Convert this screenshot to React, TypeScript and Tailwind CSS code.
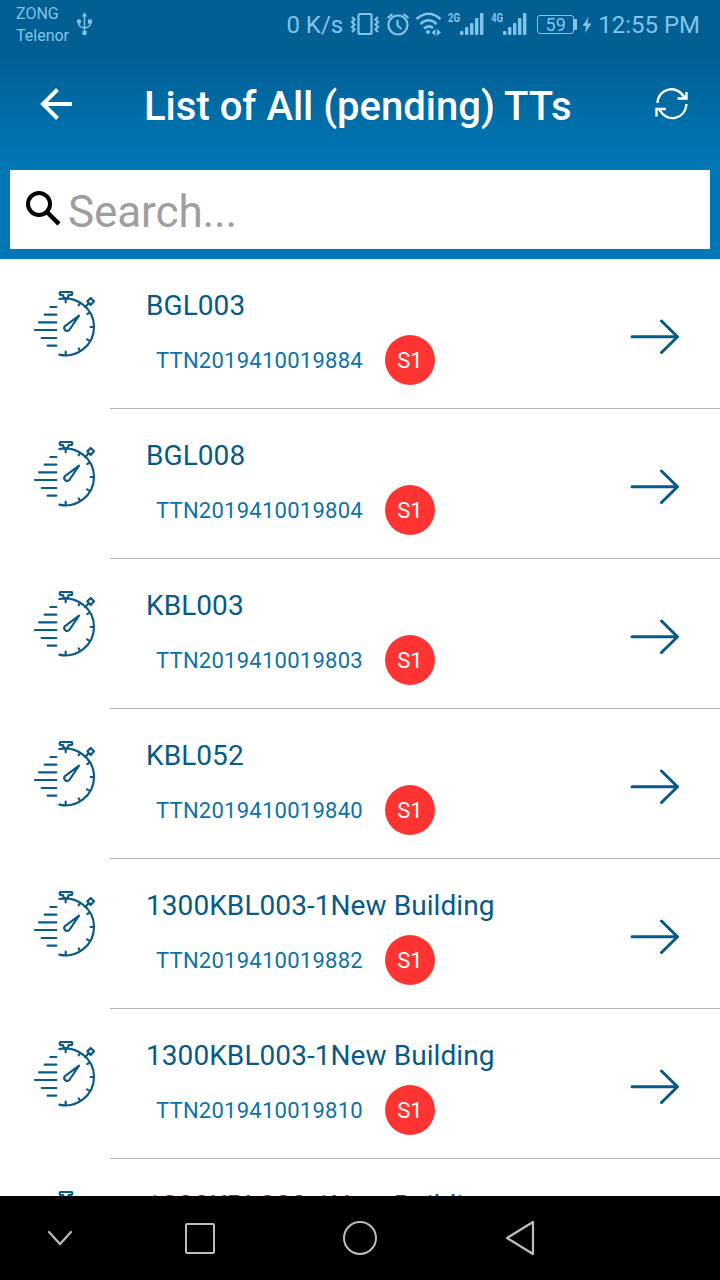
const tickets = [
  { site: "BGL003", ttn: "TTN2019410019884", severity: "S1" },
  { site: "BGL008", ttn: "TTN2019410019804", severity: "S1" },
  { site: "KBL003", ttn: "TTN2019410019803", severity: "S1" },
  { site: "KBL052", ttn: "TTN2019410019840", severity: "S1" },
  { site: "1300KBL003-1New Building", ttn: "TTN2019410019882", severity: "S1" },
  { site: "1300KBL003-1New Building", ttn: "TTN2019410019810", severity: "S1" },
];

function StopwatchIcon() {
  return (
    <svg viewBox="0 0 270 270" className="w-[90px] h-[90px] shrink-0" fill="none" stroke="#0b5a86" strokeWidth="6.500" strokeLinecap="round" strokeLinejoin="round">
      <path d="M118 57C166 47 222 82 222 141C222 198 168 236 118 224" />
      <path d="M121 36H155Q159 41 155 45H146L143 55H132L129 45H121Q117 41 121 36Z" />
      <path d="M212 54L222 64L212 75L202 64Z" />
      <path d="M204 72L196 81" />
      <path d="M177 107L148 150C140 157 129 149 134 139Z" />
      <path d="M137 58V67M180 69L176 76M209 98L202 102M221 141H212M208 182L201 178M180 212L176 205M137 224V215" />
      <path d="M91 81H109M74 104H109M57 127H109M45 150H109M65 174H109M83 197H109" />
    </svg>
  );
}

function SignalIcon({ label }: { label: string }) {
  return (
    <div className="flex">
      <span className="font-bold text-[13px] leading-3 w-[14px] origin-left scale-x-[0.75] mt-[12px]">{label}</span>
      <svg viewBox="0 0 24 24" className="w-6 h-6 mt-3 -ml-[2px]" fill="currentColor">
        <rect x="0" y="19" width="3.400" height="4" rx="1" />
        <rect x="5" y="15" width="3.400" height="8" rx="1" />
        <rect x="10" y="11" width="3.400" height="12" rx="1" />
        <rect x="15" y="6" width="3.400" height="17" rx="1" />
        <rect x="20" y="1" width="3.400" height="22" rx="1" />
      </svg>
    </div>
  );
}

function StatusBar() {
  return (
    <div className="h-[50px] flex text-[#82c3ea] pl-4 pr-5">
      <div className="text-[16px] leading-[22px] pt-[3px] w-[60px]">
        <div>ZONG</div>
        <div>Telenor</div>
      </div>
      <svg viewBox="0 0 18 26" className="w-[18px] h-[26px] mt-[11px]" fill="none" stroke="currentColor" strokeWidth="1.500">
        <path d="M8.500 5V22M3 10V13.500Q3 16 8.500 17Q14 16 14 13.500V10" />
        <path d="M8.500 1L11 5.500H6Z" fill="currentColor" stroke="none" />
        <circle cx="3" cy="10.500" r="2.200" fill="currentColor" stroke="none" />
        <path d="M12 8.500h4v4h-4zM6.500 20h4v4h-4z" fill="currentColor" stroke="none" />
      </svg>

      <div className="ml-auto flex">
        <span className="text-[24px] leading-[50px]">0 K/s</span>
        <svg viewBox="0 0 30 26" className="w-[30px] h-[26px] mt-3 ml-[7px]" fill="none" stroke="currentColor" strokeWidth="2.200">
          <rect x="8.500" y="2" width="13" height="20" rx="1.500" />
          <path d="M2 5L4.500 7.500L2 10L4.500 12.500L2 15L4.500 17.500L2 20M28 5L25.500 7.500L28 10L25.500 12.500L28 15L25.500 17.500L28 20" />
        </svg>
        <svg viewBox="0 0 24 26" className="w-6 h-[26px] mt-3 ml-[6px]" fill="none" stroke="currentColor" strokeWidth="2.200">
          <circle cx="12" cy="13" r="9.500" />
          <path d="M11.500 8V13.500L15.500 17M1.500 6L6.500 2M17.500 2L22.500 6" />
        </svg>
        <svg viewBox="0 0 28 26" className="w-7 h-[26px] mt-3 ml-[5px]" fill="none" stroke="currentColor" strokeWidth="2.600">
          <path d="M1.500 7Q13.500 -3.500 25.500 7M5.500 12Q13.500 4.500 21.500 12M9 16.500Q13.500 12.500 18 16" />
          <circle cx="13" cy="20" r="2" fill="currentColor" stroke="none" />
          <path d="M20.500 17V24L16.500 20.500ZM22 17V24L26 20.500Z" fill="currentColor" stroke="none" />
        </svg>
        <div className="ml-[5px] flex">
          <SignalIcon label="2G" />
          <div className="ml-[7px]">
            <SignalIcon label="4G" />
          </div>
        </div>
        <div className="ml-[10px] mt-[15px] w-[37px] h-[19px] rounded-[3px] border border-current text-[18px] leading-[18px] text-center">59</div>
        <div className="mt-[19px] w-[3px] h-[11px] bg-[#82c3ea]" />
        <svg viewBox="0 0 10 18" className="w-[10px] h-[18px] mt-4 ml-[5px]" fill="currentColor">
          <path d="M6.500 1L0.500 10H4L3 17L9.500 7.500H5.500Z" />
        </svg>
        <span className="text-[24px] leading-[50px] ml-[6px]">12:55 PM</span>
      </div>
    </div>
  );
}

function Header() {
  return (
    <div className="h-[259px] bg-linear-to-b from-[#005e92] from-[18%] to-[#0077b5] to-[64%]">
      <StatusBar />
      <div className="h-[120px] flex items-start pl-10 pr-[31px]">
        <svg viewBox="0 0 32 32" className="w-8 h-8 mt-[38px]" fill="none" stroke="#fff" strokeWidth="4">
          <path d="M32 16H3M17.500 1.500L3 16L17.500 30.500" />
        </svg>
        <h1 className="ml-[72px] text-[40px] leading-[48px] mt-[33px] font-medium text-white whitespace-nowrap">List of All (pending) TTs</h1>
        <svg viewBox="0 0 34 34" className="w-[34px] h-[34px] mt-[37px] ml-auto" fill="none" stroke="#fff" strokeWidth="2.400">
          <path d="M2.500 16C3 1 22 -3 29.500 10.500M31.500 5V11.500H22.500M31.500 17C30 33 12 36 4.500 23M1.500 29.500V22H11" />
        </svg>
      </div>
      <div className="mx-[10px] h-[79px] bg-white flex items-center">
        <svg viewBox="0 0 36 36" className="w-9 h-9 ml-[15px] -mt-1" fill="none" stroke="#000" strokeWidth="4">
          <circle cx="14" cy="14" r="11" />
          <path d="M22 22L34 34" strokeWidth="4.500" />
        </svg>
        <span className="ml-[7px] mt-1 text-[44px] leading-[52px] tracking-[-0.1px] text-[#9e9e9e]">Search...</span>
      </div>
    </div>
  );
}

function TicketRow({ site, ttn, severity }: { site: string; ttn: string; severity: string }) {
  return (
    <div className="h-[150px] shrink-0 flex pl-5">
      <div className="pt-[21px] w-[90px] shrink-0">
        <StopwatchIcon />
      </div>
      <div className="flex-1 flex border-b border-[#b4b4b4]">
        <div className="pl-9 flex-1">
          <div className="text-[28px] leading-8 mt-[31px] tracking-[0.07px] text-[#075a85] whitespace-nowrap">{site}</div>
          <div className="flex items-center mt-[12.500px] pl-[10px]">
            <span className="w-[229px] text-[22px] leading-7 pt-[2px] tracking-[0.25px] text-[#0b72a8]">{ttn}</span>
            <span className="w-[50px] h-[50px] rounded-full bg-[#fd3431] text-white text-[22px] leading-[52px] text-center">{severity}</span>
          </div>
        </div>
        <svg viewBox="0 0 50 36" className="w-[50px] h-9 mt-[60px] mr-10 shrink-0" fill="none" stroke="#075a85" strokeWidth="3" strokeLinecap="round" strokeLinejoin="round">
          <path d="M2 17.700H47.500M31.500 2L47.500 17.700L31.500 33.500" />
        </svg>
      </div>
    </div>
  );
}

function NavBar() {
  return (
    <div className="h-[84px] bg-black flex items-center">
      <svg viewBox="0 0 26 16" className="w-[26px] h-4 ml-[47px]" fill="none" stroke="#bdbdbd" strokeWidth="2.200" strokeLinecap="round">
        <path d="M2 2L13 14L24 2" />
      </svg>
      <div className="ml-[112px] w-[30px] h-[31px] rounded-[2px] border-2 border-[#bdbdbd]" />
      <div className="ml-[128px] w-[34px] h-[34px] rounded-full border-2 border-[#bdbdbd]" />
      <svg viewBox="0 0 30 36" className="w-[30px] h-9 ml-[128px]" fill="none" stroke="#bdbdbd" strokeWidth="2.200" strokeLinejoin="round">
        <path d="M28 2V34L2 18Z" />
      </svg>
    </div>
  );
}

export default function App() {
  return (
    <div className="w-[720px] h-[1280px] overflow-hidden bg-white flex flex-col font-['Roboto',sans-serif]">
      <Header />
      <div className="h-[937px] overflow-hidden flex flex-col">
        {tickets.map((ticket, i) => (
          <TicketRow key={i} {...ticket} />
        ))}
        {/* next row, only its top edge shows above the nav bar */}
        <div className="h-[37px] shrink-0 overflow-hidden flex items-start pl-5">
          <div className="pt-[21px] w-[90px] shrink-0">
            <StopwatchIcon />
          </div>
          <div className="pl-9 pt-[31px] text-[28px] leading-8 tracking-[0.07px] text-[#075a85] whitespace-nowrap">1300KBL003-1New Building</div>
        </div>
      </div>
      <NavBar />
    </div>
  );
}
